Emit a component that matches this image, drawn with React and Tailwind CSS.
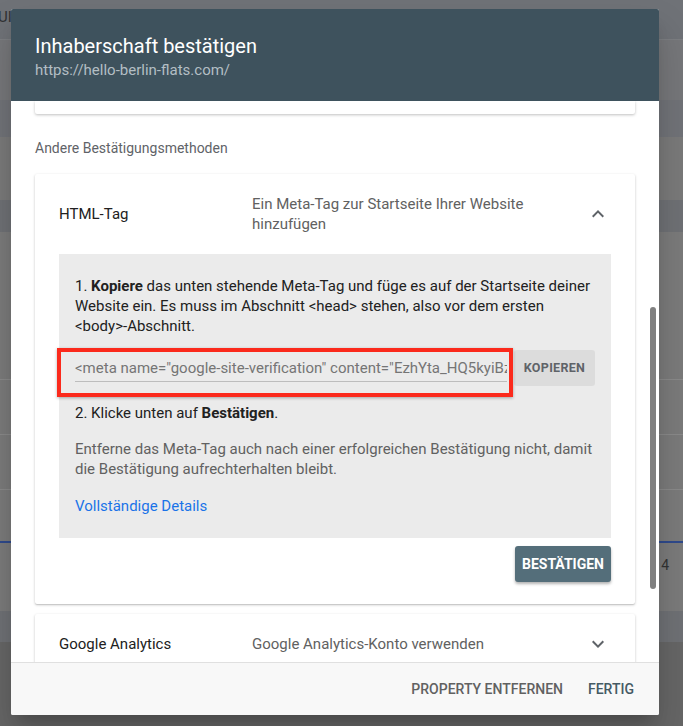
import { useState } from 'react';

function ChevronIcon({ up }) {
  return (
    <svg width="24" height="24" viewBox="0 0 24 24" className="fill-[#5f6368]">
      {up ? (
        <path d="M12 8l-6 6 1.41 1.41L12 10.83l4.59 4.58L18 14z" />
      ) : (
        <path d="M16.59 8.59L12 13.17 7.41 8.59 6 10l6 6 6-6z" />
      )}
    </svg>
  );
}

function MethodHeader({ title, desc, open, tall }) {
  return (
    <div className={`flex items-center pl-6 pr-[25px] ${tall ? 'h-20' : 'h-[60px]'}`}>
      <div className="w-[193px] text-[15px] text-[#212121]">{title}</div>
      <div className="w-[300px] text-[15px] leading-5 text-[#616161]">{desc}</div>
      <div className="ml-auto">
        <ChevronIcon up={open} />
      </div>
    </div>
  );
}

function Background() {
  return (
    <div className="flex h-full flex-col bg-[#7a7a7a]">
      <div className="flex h-10 shrink-0 items-center border-b border-[#7c7e82] bg-[#6f7277] text-[15px] text-[#2f3133]">
        <span className="-ml-[2px] pb-1">UI</span>
      </div>
      <div className="h-[60px] bg-[#76777a]" />
      <div className="h-[37px] bg-[#717378]" />
      <div className="h-[63px] bg-[#7a7a7a]" />
      <div className="h-8 bg-[#6f7175]" />
      <div className="h-[148px] border-b border-[#8a8a8a] bg-[#7b7b7b]" />
      <div className="h-[55px] border-b border-[#8a8a8a] bg-[#7b7b7b]" />
      <div className="h-[55px] border-b border-[#8a8a8a] bg-[#7b7b7b]" />
      <div className="h-[53px] border-b-2 border-[#2f4a8c] bg-[#7b7b7b]" />
      <div className="flex h-[68px] items-start justify-end bg-[#7b7b7b] pt-[12px] pr-[14px] text-[14px] text-[#333]">
        4
      </div>
      <div className="h-[31px] bg-[#6f7175]" />
      <div className="flex-1 bg-[#666666]" />
    </div>
  );
}

export default function App() {
  const [copied, setCopied] = useState(false);

  return (
    <div className="relative h-[726px] w-[683px] overflow-hidden font-['Roboto',sans-serif]">
      <Background />

      {/* dialog */}
      <div className="absolute left-[11px] top-[9px] flex h-[706px] w-[648px] flex-col overflow-hidden rounded-[2px] bg-white shadow-[0_11px_15px_-7px_rgba(0,0,0,0.2),0_24px_38px_3px_rgba(0,0,0,0.14)]">
        <div className="h-[92px] shrink-0 bg-[#3e525d] pl-6 pt-[23px]">
          <h1 className="text-[20px] leading-7 text-white">Inhaberschaft bestätigen</h1>
          <div className="text-[15px] leading-5 text-[#b3bec4]">https://hello-berlin-flats.com/</div>
        </div>

        <div className="relative flex-1 overflow-hidden">
          <div className="px-6">
            <div className="h-[13px] rounded-b-[2px] bg-white shadow-[0_1px_3px_rgba(0,0,0,0.25)]" />

            <div className="mt-6 text-[14px] leading-5 text-[#5f6368]">Andere Bestätigungsmethoden</div>

            <div className="mt-4 rounded-[2px] bg-white shadow-[0_1px_3px_rgba(0,0,0,0.2),0_1px_1px_rgba(0,0,0,0.1)]">
              <MethodHeader
                tall
                open
                title="HTML-Tag"
                desc="Ein Meta-Tag zur Startseite Ihrer Website hinzufügen"
              />
              <div className="px-6 pb-[22px]">
                <div className="bg-[#ebebeb] px-4 pb-[22px] pt-[22px] text-[15px] leading-5 text-[#212121]">
                  <p>
                    1. <b className="font-bold">Kopiere</b> das unten stehende Meta-Tag und füge es auf der Startseite
                    deiner Website ein. Es muss im Abschnitt &lt;head&gt; stehen, also vor dem ersten
                    &lt;body&gt;-Abschnitt.
                  </p>

                  <div className="mt-[14px] flex h-9 items-stretch gap-[7px]">
                    <div className="relative min-w-0 flex-1">
                      <div className="flex h-[32px] items-end overflow-hidden whitespace-nowrap border-b border-[#bdbdbd] pb-[3px] text-[15px] text-[#757575]">
                        &lt;meta name="google-site-verification" content="EzhYta_HQ5kyiBz8pQ2" /&gt;
                      </div>
                      <div className="pointer-events-none absolute -left-[18px] -right-[6px] -top-[2px] -bottom-[11px] border-4 border-[#fb2a1c] shadow-[0_1px_3px_rgba(0,0,0,0.3)]" />
                    </div>
                    <button
                      onClick={() => setCopied(true)}
                      className="w-[81px] shrink-0 rounded-[3px] bg-[#dcdcdc] text-[12.5px] font-bold tracking-[0.3px] text-[#5f6368]"
                    >
                      {copied ? 'KOPIERT' : 'KOPIEREN'}
                    </button>
                  </div>

                  <p className="mt-[17px]">
                    2. Klicke unten auf <b className="font-bold">Bestätigen</b>.
                  </p>
                  <p className="mt-4 text-[#616161]">
                    Entferne das Meta-Tag auch nach einer erfolgreichen Bestätigung nicht, damit die Bestätigung
                    aufrechterhalten bleibt.
                  </p>
                  <a href="#" className="mt-[17px] block text-[#1a73e8]">
                    Vollständige Details
                  </a>
                </div>
                <div className="mt-2 flex justify-end">
                  <button className="h-9 w-24 rounded-[3px] bg-[#546e7a] text-[14px] font-bold text-white shadow-[0_2px_3px_rgba(0,0,0,0.3)]">
                    BESTÄTIGEN
                  </button>
                </div>
              </div>
            </div>

            <div className="mt-[10px] rounded-[2px] bg-white shadow-[0_1px_3px_rgba(0,0,0,0.2),0_1px_1px_rgba(0,0,0,0.1)]">
              <MethodHeader title="Google Analytics" desc="Google Analytics-Konto verwenden" />
              <div className="h-10" />
            </div>
          </div>

          {/* scrollbar */}
          <div className="absolute right-[3px] top-[206px] h-[282px] w-[6px] rounded-full bg-[#808080]" />
        </div>

        <div className="flex h-[53px] shrink-0 items-center justify-end gap-[25px] border-t border-[#e0e0e0] bg-[#f8f8f8] pr-[25px] text-[14px] font-medium">
          <button className="text-[#616161]">PROPERTY ENTFERNEN</button>
          <button className="text-[#455a64]">FERTIG</button>
        </div>
      </div>
    </div>
  );
}
